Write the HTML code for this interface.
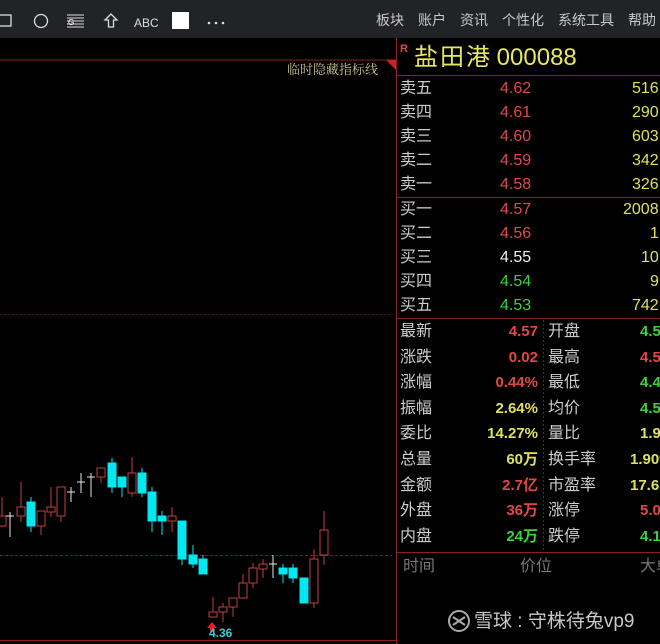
<!DOCTYPE html>
<html><head><meta charset="utf-8"><style>
*{margin:0;padding:0;box-sizing:border-box}
body{width:660px;height:644px;background:#000;overflow:hidden;position:relative;font-family:"Liberation Sans","Noto Sans CJK SC",sans-serif}
.tb{position:absolute;left:0;top:0;width:660px;height:38px;background:#222326}
.menu{position:absolute;top:10px;font-size:14px;color:#c8c8c8;white-space:nowrap}
.t{position:absolute;font-size:16px;white-space:nowrap;line-height:18px}
.l{color:#ccc}
.r{color:#e04848}.y{color:#e0e060}.g{color:#3cd23c}.w{color:#f0f0f0}
.b{font-weight:bold;font-size:15px}
</style></head><body>
<div class="tb">
<svg width="240" height="38" style="position:absolute;left:0;top:0">
<rect x="-2" y="15" width="13" height="11" fill="none" stroke="#ddd" stroke-width="1.3"/>
<circle cx="41" cy="21" r="6.5" fill="none" stroke="#ddd" stroke-width="1.3"/>
<g stroke="#ddd" stroke-width="1"><line x1="67" y1="15" x2="84" y2="15"/><line x1="67" y1="18" x2="84" y2="18"/><line x1="67" y1="21" x2="84" y2="21"/><line x1="67" y1="24" x2="84" y2="24"/><line x1="67" y1="27" x2="84" y2="27"/></g>
<text x="68" y="25" font-size="8" fill="#fff" font-family="Liberation Sans">G</text>
<path d="M111 14 L105 20 L108.5 20 L108.5 27 L113.5 27 L113.5 20 L117 20 Z" fill="none" stroke="#ddd" stroke-width="1.3"/>
<text x="134" y="27" font-size="12" fill="#ddd" font-family="Liberation Sans">ABC</text>
<rect x="172" y="12" width="17" height="17" fill="#fff"/>
<g fill="#ddd"><circle cx="209" cy="23" r="1.3"/><circle cx="216" cy="23" r="1.3"/><circle cx="223" cy="23" r="1.3"/></g>
</svg>
<div class="menu" style="left:376px">板块</div>
<div class="menu" style="left:418px">账户</div>
<div class="menu" style="left:460px">资讯</div>
<div class="menu" style="left:502px">个性化</div>
<div class="menu" style="left:558px">系统工具</div>
<div class="menu" style="left:628px">帮助</div>
</div>
<svg width="660" height="644" style="position:absolute;left:0;top:0">
<line x1="0" y1="60" x2="396" y2="60" stroke="#8a2020" stroke-width="1"/>
<polygon points="386,60 396,60 396,70" fill="#d02020"/>
<line x1="396.5" y1="38" x2="396.5" y2="644" stroke="#8a2020"/>
<line x1="397" y1="75.5" x2="660" y2="75.5" stroke="#8a2020"/>
<line x1="397" y1="197.5" x2="660" y2="197.5" stroke="#8a2020"/>
<line x1="397" y1="318.5" x2="660" y2="318.5" stroke="#8a2020"/>
<line x1="397" y1="552.5" x2="660" y2="552.5" stroke="#8a2020"/>
<line x1="543.5" y1="320" x2="543.5" y2="552" stroke="#6a2020" stroke-dasharray="2,2"/>
<line x1="0" y1="314.5" x2="392" y2="314.5" stroke="#5a1818" stroke-dasharray="2,2"/>
<line x1="0" y1="555.5" x2="392" y2="555.5" stroke="#6a2020" stroke-dasharray="3,2"/>
<line x1="0" y1="640.5" x2="396" y2="640.5" stroke="#8a2020"/>
<g stroke-width="1">
<g stroke="#c04040" fill="#000">
<line x1="2" y1="497" x2="2" y2="527"/><rect x="-2" y="516" width="8" height="10"/>
<line x1="21" y1="482" x2="21" y2="522"/><rect x="17" y="507" width="8" height="9"/>
<line x1="41" y1="511" x2="41" y2="535"/><rect x="37" y="511" width="8" height="15"/>
<line x1="51" y1="487" x2="51" y2="517"/><rect x="47" y="507" width="8" height="5"/>
<line x1="61" y1="487" x2="61" y2="522"/><rect x="57" y="487" width="8" height="29"/>
<line x1="101" y1="468" x2="101" y2="483"/><rect x="97" y="468" width="8" height="9"/>
<line x1="132" y1="457" x2="132" y2="497"/><rect x="128" y="473" width="8" height="20"/>
<line x1="172" y1="507" x2="172" y2="532"/><rect x="168" y="516" width="8" height="5"/>
<line x1="213" y1="597" x2="213" y2="617"/><rect x="209" y="612" width="8" height="5"/>
<line x1="223" y1="603" x2="223" y2="622"/><rect x="219" y="607" width="8" height="5"/>
<line x1="233" y1="598" x2="233" y2="617"/><rect x="229" y="598" width="8" height="9"/>
<line x1="243" y1="574" x2="243" y2="598"/><rect x="239" y="583" width="8" height="15"/>
<line x1="253" y1="563" x2="253" y2="588"/><rect x="249" y="568" width="8" height="15"/>
<line x1="263" y1="559" x2="263" y2="578"/><rect x="259" y="564" width="8" height="5"/>
<line x1="314" y1="549" x2="314" y2="608"/><rect x="310" y="559" width="8" height="44"/>
<line x1="324" y1="511" x2="324" y2="565"/><rect x="320" y="530" width="8" height="25"/>
</g>
<g stroke="#00e8f0" fill="#00e8f0">
<line x1="31" y1="497" x2="31" y2="532"/><rect x="27" y="502" width="8" height="24"/>
<line x1="112" y1="458" x2="112" y2="493"/><rect x="108" y="463" width="8" height="24"/>
<line x1="122" y1="477" x2="122" y2="497"/><rect x="118" y="477" width="8" height="10"/>
<line x1="142" y1="468" x2="142" y2="497"/><rect x="138" y="473" width="8" height="20"/>
<line x1="152" y1="487" x2="152" y2="532"/><rect x="148" y="492" width="8" height="29"/>
<line x1="162" y1="511" x2="162" y2="535"/><rect x="158" y="516" width="8" height="5"/>
<line x1="182" y1="521" x2="182" y2="565"/><rect x="178" y="521" width="8" height="38"/>
<line x1="193" y1="545" x2="193" y2="568"/><rect x="189" y="555" width="8" height="9"/>
<line x1="203" y1="555" x2="203" y2="574"/><rect x="199" y="559" width="8" height="15"/>
<line x1="283" y1="564" x2="283" y2="583"/><rect x="279" y="568" width="8" height="6"/>
<line x1="293" y1="564" x2="293" y2="583"/><rect x="289" y="568" width="8" height="10"/>
<rect x="300" y="578" width="8" height="25"/>
</g>
<g stroke="#e8e8e8">
<line x1="10" y1="512" x2="10" y2="537"/><line x1="6" y1="516" x2="14" y2="516"/>
<line x1="71" y1="487" x2="71" y2="502"/><line x1="67" y1="492" x2="75" y2="492"/>
<line x1="81" y1="473" x2="81" y2="493"/><line x1="77" y1="482" x2="85" y2="482"/>
<line x1="91" y1="473" x2="91" y2="497"/><line x1="87" y1="477" x2="95" y2="477"/>
<line x1="273" y1="555" x2="273" y2="578"/><line x1="269" y1="564" x2="277" y2="564"/>
</g>
</g>
<path d="M212 622 L207 628 L210 628 L210 632 L214 632 L214 628 L217 628 Z" fill="#e02020"/>
<text x="209" y="637" font-size="12" fill="#40c8d0" font-weight="bold" font-family="Liberation Sans">4.36</text>
<text x="287" y="74" font-size="13" fill="#c8c090" font-family="Liberation Serif,Noto Serif CJK SC,serif">临时隐藏指标线</text>
</svg>
<div class="t" style="left:400px;top:40px;font-size:11px;color:#e04848;font-weight:bold">R</div>
<div class="t" style="left:414px;top:43px;font-size:24px;line-height:30px;color:#e8e860">盐&#8202;田&#8202;港&nbsp;000088</div>

<div class="t l" style="left:400px;top:80px">卖五</div><div class="t r" style="left:500px;top:80px">4.62</div><div class="t y" style="left:632px;top:80px">516</div>
<div class="t l" style="left:400px;top:104px">卖四</div><div class="t r" style="left:500px;top:104px">4.61</div><div class="t y" style="left:632px;top:104px">290</div>
<div class="t l" style="left:400px;top:128px">卖三</div><div class="t r" style="left:500px;top:128px">4.60</div><div class="t y" style="left:632px;top:128px">603</div>
<div class="t l" style="left:400px;top:152px">卖二</div><div class="t r" style="left:500px;top:152px">4.59</div><div class="t y" style="left:632px;top:152px">342</div>
<div class="t l" style="left:400px;top:176px">卖一</div><div class="t r" style="left:500px;top:176px">4.58</div><div class="t y" style="left:632px;top:176px">326</div>
<div class="t l" style="left:400px;top:201px">买一</div><div class="t y" style="left:623px;top:201px">2008</div><div class="t r" style="left:500px;top:201px">4.57</div>
<div class="t l" style="left:400px;top:225px">买二</div><div class="t r" style="left:500px;top:225px">4.56</div><div class="t y" style="left:650px;top:225px">1</div>
<div class="t l" style="left:400px;top:249px">买三</div><div class="t w" style="left:500px;top:249px">4.55</div><div class="t y" style="left:641px;top:249px">10</div>
<div class="t l" style="left:400px;top:273px">买四</div><div class="t g" style="left:500px;top:273px">4.54</div><div class="t y" style="left:650px;top:273px">9</div>
<div class="t l" style="left:400px;top:297px">买五</div><div class="t g" style="left:500px;top:297px">4.53</div><div class="t y" style="left:632px;top:297px">742</div>

<div style="position:absolute;left:400px;top:323px;width:138px">
<div style="position:relative;height:25.6px"><span class="t l" style="left:0">最新</span><span class="t r b" style="right:0">4.57</span></div>
<div style="position:relative;height:25.6px"><span class="t l" style="left:0">涨跌</span><span class="t r b" style="right:0">0.02</span></div>
<div style="position:relative;height:25.6px"><span class="t l" style="left:0">涨幅</span><span class="t r b" style="right:0">0.44%</span></div>
<div style="position:relative;height:25.6px"><span class="t l" style="left:0">振幅</span><span class="t y b" style="right:0">2.64%</span></div>
<div style="position:relative;height:25.6px"><span class="t l" style="left:0">委比</span><span class="t y b" style="right:0">14.27%</span></div>
<div style="position:relative;height:25.6px"><span class="t l" style="left:0">总量</span><span class="t y b" style="right:0">60万</span></div>
<div style="position:relative;height:25.6px"><span class="t l" style="left:0">金额</span><span class="t r b" style="right:0">2.7亿</span></div>
<div style="position:relative;height:25.6px"><span class="t l" style="left:0">外盘</span><span class="t r b" style="right:0">36万</span></div>
<div style="position:relative;height:25.6px"><span class="t l" style="left:0">内盘</span><span class="t g b" style="right:0">24万</span></div>
</div>
<div style="position:absolute;left:548px;top:323px;width:130px">
<div style="position:relative;height:25.6px"><span class="t l" style="left:0">开盘</span><span class="t g b" style="left:92px">4.55</span></div>
<div style="position:relative;height:25.6px"><span class="t l" style="left:0">最高</span><span class="t r b" style="left:92px">4.59</span></div>
<div style="position:relative;height:25.6px"><span class="t l" style="left:0">最低</span><span class="t g b" style="left:92px">4.47</span></div>
<div style="position:relative;height:25.6px"><span class="t l" style="left:0">均价</span><span class="t g b" style="left:92px">4.53</span></div>
<div style="position:relative;height:25.6px"><span class="t l" style="left:0">量比</span><span class="t y b" style="left:92px">1.94</span></div>
<div style="position:relative;height:25.6px"><span class="t l" style="left:0">换手率</span><span class="t y b" style="left:82px">1.90%</span></div>
<div style="position:relative;height:25.6px"><span class="t l" style="left:0">市盈率</span><span class="t y b" style="left:82px">17.65</span></div>
<div style="position:relative;height:25.6px"><span class="t l" style="left:0">涨停</span><span class="t r b" style="left:92px">5.03</span></div>
<div style="position:relative;height:25.6px"><span class="t l" style="left:0">跌停</span><span class="t g b" style="left:92px">4.11</span></div>
</div>
<div class="t" style="left:403px;top:558px;color:#777">时间</div>
<div class="t" style="left:520px;top:558px;color:#777">价位</div>
<div class="t" style="left:640px;top:558px;color:#777">大单</div>
<svg width="24" height="24" style="position:absolute;left:447px;top:609px"><circle cx="12" cy="12" r="10" fill="none" stroke="#aaa" stroke-width="2"/><path d="M6 8 L18 16 M18 8 L6 16" stroke="#aaa" stroke-width="2" fill="none"/></svg>
<div class="t" style="left:474px;top:610px;font-size:19px;line-height:24px;color:#c8c8c8">雪球 : 守株待兔vp9</div>
</body></html>
